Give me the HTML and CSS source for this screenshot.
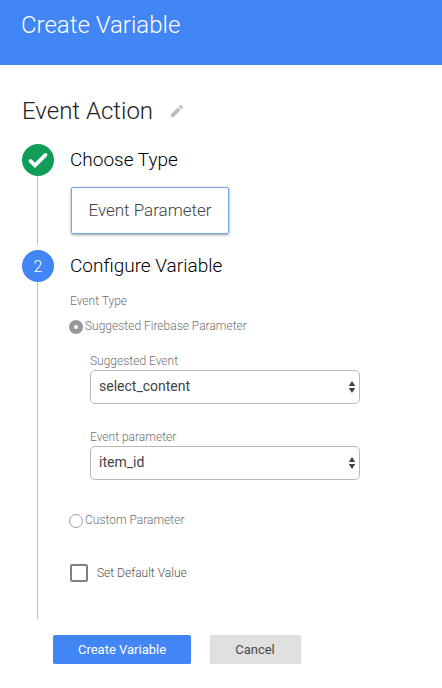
FILE: index.html
```html
<!DOCTYPE html>
<html lang="en">
<head>
<meta charset="utf-8">
<title>Create Variable</title>
<link rel="stylesheet" href="styles.css">
</head>
<body>
<header class="topbar"><h1>Create Variable</h1></header>
<main>
  <div class="name-row">
    <h2>Event Action</h2>
    <svg class="pencil" viewBox="0 0 14 14" aria-hidden="true"><path d="M1 10.2V13h2.8l6.8-6.8-2.8-2.8zM12.8 4a.8.8 0 0 0 0-1.1l-1.7-1.7a.8.8 0 0 0-1.1 0L8.6 2.6l2.8 2.8z"/></svg>
  </div>
  <section class="step step-type">
    <div class="rail">
      <span class="badge done"><svg viewBox="0 0 32 32" aria-hidden="true"><path d="M8.5 17l4.5 4.4L23.5 10.9"/></svg></span>
      <span class="line"></span>
    </div>
    <div class="content">
      <h3 class="t-type">Choose Type</h3>
      <div class="type-card"><span>Event Parameter</span></div>
    </div>
  </section>
  <section class="step step-config">
    <div class="rail">
      <span class="badge">2</span>
      <span class="line"></span>
    </div>
    <div class="content">
      <h3 class="t-config">Configure Variable</h3>
      <div class="label">Event Type</div>
      <div class="radio-row"><span class="radio on"></span><span class="radio-text">Suggested Firebase Parameter</span></div>
      <div class="fields">
        <div class="label">Suggested Event</div>
        <div class="select"><span>select_content</span><svg viewBox="0 0 8 14" aria-hidden="true"><path d="M4 1l3.2 5H.8zM4 13L.8 8h6.4z"/></svg></div>
        <div class="label second">Event parameter</div>
        <div class="select"><span>item_id</span><svg viewBox="0 0 8 14" aria-hidden="true"><path d="M4 1l3.2 5H.8zM4 13L.8 8h6.4z"/></svg></div>
      </div>
      <div class="radio-row custom"><span class="radio"></span><span class="radio-text">Custom Parameter</span></div>
      <div class="check-row"><span class="checkbox"></span><span class="check-text">Set Default Value</span></div>
    </div>
  </section>
  <div class="actions">
    <div class="button primary">Create Variable</div>
    <div class="button cancel">Cancel</div>
  </div>
</main>
</body>
</html>
```
FILE: styles.css
```css
* { box-sizing: border-box; }
body { margin: 0; background: #fff; font-family: Roboto, "Liberation Sans", sans-serif; color: #212121; }
h1, h2, h3 { margin: 0; font-weight: 300; white-space: nowrap; }
.topbar { height: 65px; background: #4285f4; padding: 10px 21px; }
h1 { font-size: 24px; line-height: 30px; color: #fff; }
main { padding: 31px 22px 0; }
.name-row { display: flex; align-items: center; gap: 17px; height: 30px; }
h2 { font-size: 24px; line-height: 30px; }
.pencil { width: 14px; height: 14px; fill: #bdbdbd; }
.step { display: flex; gap: 16px; }
.step-type { height: 101px; margin-top: 18px; }
.step-config { height: 369px; margin-top: 5px; }
.rail { width: 32px; display: flex; flex-direction: column; align-items: center; }
.badge { width: 32px; height: 32px; flex: none; border-radius: 50%; background: #4285f4; color: #fff; font-size: 16px; font-weight: 300; line-height: 33px; text-align: center; }
.badge.done { background: #0f9d58; }
.badge svg { display: block; width: 32px; height: 32px; fill: none; stroke: #fff; stroke-width: 3.8; stroke-linecap: round; }
.line { width: 1px; flex: 1; margin-right: 1px; background: #c2c2c2; }
h3 { font-size: 19px; line-height: 32px; color: #000; }
.type-card { width: 158px; height: 47px; margin: 11px 0 0 1px; border: 1px solid #74a5f6; border-radius: 2px; box-shadow: 0 1px 3px rgba(0,0,0,.4); display: flex; align-items: center; justify-content: center; font-size: 17px; line-height: 20px; font-weight: 300; color: #424242; }
.type-card span { margin-bottom: 1px; }
.label { font-size: 12px; line-height: 16px; font-weight: 300; color: #707070; white-space: nowrap; }
.t-config + .label { margin-top: 11px; }
.radio-row { display: flex; align-items: center; height: 16px; margin-top: 9px; font-size: 12px; font-weight: 300; color: #707070; }
.radio { width: 14px; height: 14px; margin: 2px 2px 0 -1px; border: 1px solid #a0a0a0; border-radius: 50%; }
.radio.on { border: 5px solid #98979c; }
.fields { width: 270px; margin: 19px 0 0 20px; }
.select { height: 34px; margin-top: 1px; padding: 0 3px 0 8px; border: 1px solid #b9b9b9; border-radius: 5px; display: flex; align-items: center; justify-content: space-between; font-size: 14px; line-height: 16px; color: #424242; }
.select span { margin-bottom: 2px; }
.select svg { width: 8px; height: 14px; fill: #404040; }
.label.second { margin-top: 25px; }
.radio-row.custom { margin-top: 32px; }
.check-row { display: flex; align-items: center; height: 18px; margin-top: 36px; gap: 9px; font-size: 12px; font-weight: 300; color: #505050; }
.checkbox { width: 18px; height: 18px; border: 2px solid #808080; border-radius: 2px; }
.actions { display: flex; gap: 19px; margin: 16px 0 0 31px; }
.button { height: 29px; border-radius: 2px; font-size: 13px; line-height: 29px; text-align: center; }
.primary { width: 138px; background: #4285f4; color: #fff; box-shadow: 0 1px 1px rgba(0,0,0,.18); }
.cancel { width: 91px; padding-right: 1px; background: #e0e0e0; color: #484848; box-shadow: 0 1px 1px rgba(0,0,0,.18); }
```
